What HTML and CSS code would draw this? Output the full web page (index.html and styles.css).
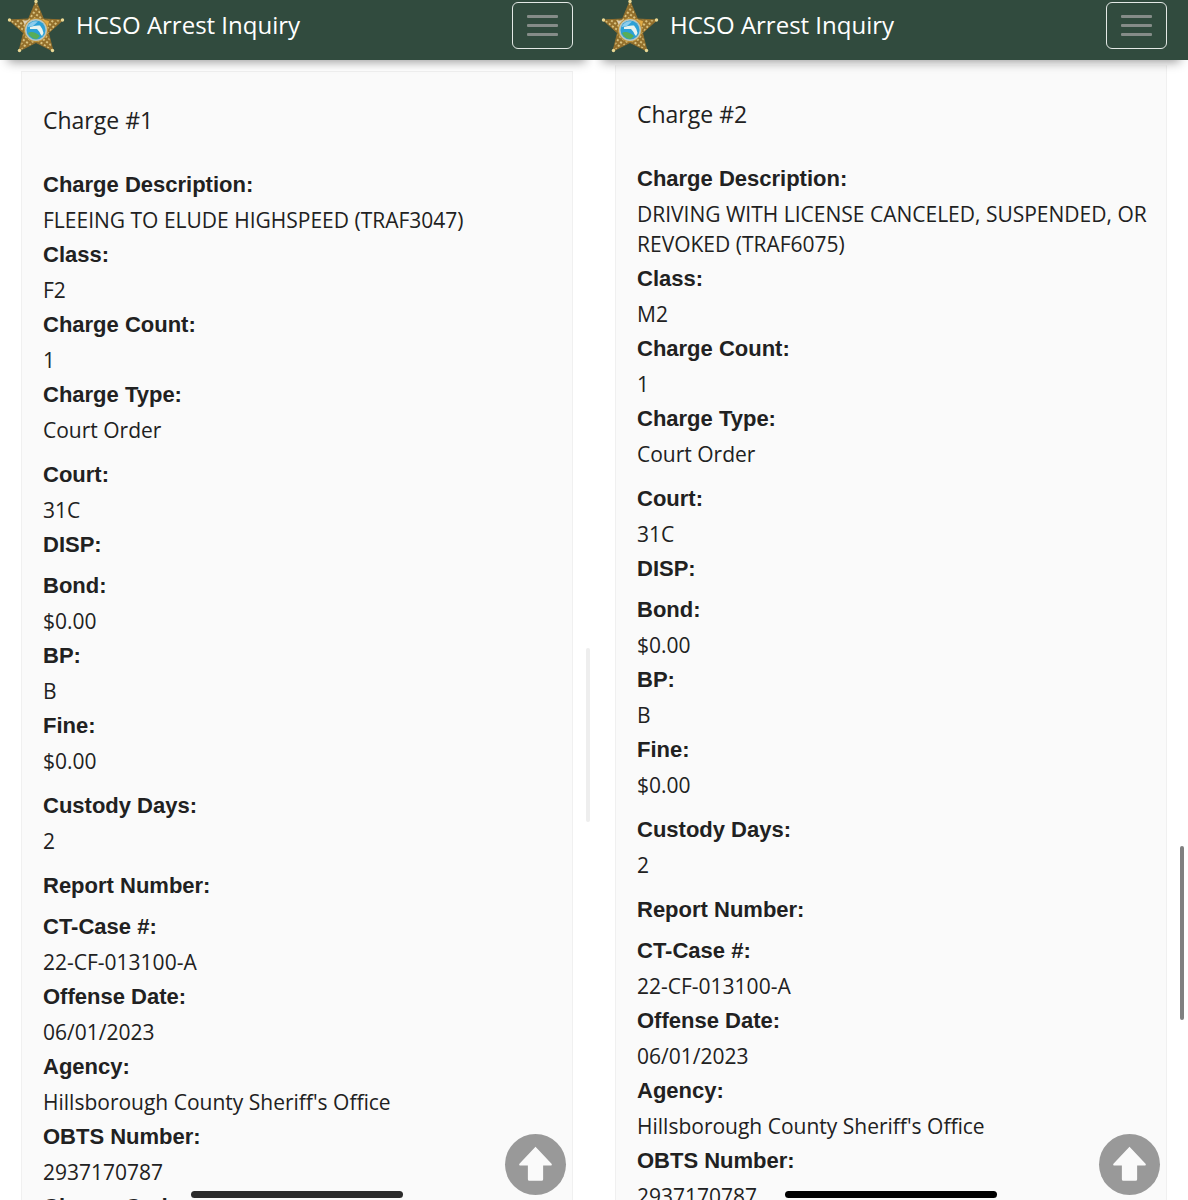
FILE: index.html
```html
<!DOCTYPE html>
<html lang="en">
<head>
<meta charset="utf-8">
<meta name="viewport" content="width=device-width, initial-scale=1">
<title>HCSO Arrest Inquiry</title>
<link rel="stylesheet" href="styles.css">
</head>
<body>
<svg width="0" height="0" class="defs" aria-hidden="true">
  <defs>
    <pattern id="beads" width="4" height="4" patternUnits="userSpaceOnUse" patternTransform="rotate(36)">
      <rect width="4" height="4" fill="#94702c"/>
      <circle cx="2" cy="2" r="1.100" fill="#ead591"/>
    </pattern>
    <symbol id="badge" viewBox="0 0 60 54">
      <path d="M30 1 37.500 19 57 20 42.500 33 47 51 30 42.500 13 51 17.500 33 3 20 22.500 19Z" fill="url(#beads)" stroke="#8f6d2c" stroke-width="1" stroke-linejoin="round"/>
      <g fill="#ead995"><circle cx="30" cy="1.500" r="1.700"/><circle cx="56.500" cy="20" r="1.700"/><circle cx="46.500" cy="50.500" r="1.700"/><circle cx="13.500" cy="50.500" r="1.700"/><circle cx="3.500" cy="20" r="1.700"/></g>
      <path d="M17 21 23 20 26 25 20 28Z" fill="#d9cfb6"/>
      <path d="M34 19 43 21 42 26 36 26Z" fill="#e0a943"/>
      <circle cx="30" cy="30" r="12" fill="#c0933a"/>
      <circle cx="30" cy="30" r="11" fill="#b9c5bd"/>
      <circle cx="30" cy="30" r="9.500" fill="#2ba0d6"/>
      <path d="M21.500 27Q25 20 32 21.500L27 26Z" fill="#8dccec"/>
      <path d="M22 33Q27 30 34 36L31 39Q25 39 22 33Z" fill="#58ad58"/>
      <path d="M24 27Q29 25 34 25.500 37 29 37.500 33L36 36Q34 34 33.500 32L31 29 24 29Z" fill="#e8f3ee"/>
    </symbol>
    <symbol id="up" viewBox="0 0 60 60">
      <path d="M30 12.500 46 29.500Q46.500 31 45 31H37.500V44.500Q37.500 46 36 46H24Q22.500 46 22.500 44.500V31H15Q13.500 31 14 29.500Z" fill="#fafafa"/>
    </symbol>
  </defs>
</svg>
<main class="screens">
  <section class="screen">
    <header class="navbar">
      <a class="brand" href="#"><svg class="logo" aria-hidden="true"><use href="#badge"/></svg><span>HCSO Arrest Inquiry</span></a>
      <button class="toggler" type="button" aria-label="Menu"><span></span><span></span><span></span></button>
    </header>
    <article class="card">
      <h2>Charge #1</h2>
      <dl>
        <dt>Charge Description:</dt><dd>FLEEING TO ELUDE HIGHSPEED (TRAF3047)</dd>
        <dt>Class:</dt><dd>F2</dd>
        <dt>Charge Count:</dt><dd>1</dd>
        <dt>Charge Type:</dt><dd>Court Order</dd>
      </dl>
      <dl>
        <dt>Court:</dt><dd>31C</dd>
        <dt>DISP:</dt>
      </dl>
      <dl>
        <dt>Bond:</dt><dd>$0.00</dd>
        <dt>BP:</dt><dd>B</dd>
        <dt>Fine:</dt><dd>$0.00</dd>
      </dl>
      <dl>
        <dt>Custody Days:</dt><dd>2</dd>
      </dl>
      <dl>
        <dt>Report Number:</dt>
      </dl>
      <dl>
        <dt>CT-Case #:</dt><dd>22-CF-013100-A</dd>
        <dt>Offense Date:</dt><dd>06/01/2023</dd>
        <dt>Agency:</dt><dd>Hillsborough County Sheriff's Office</dd>
        <dt>OBTS Number:</dt><dd>2937170787</dd>
        <dt>Charge Code:</dt>
      </dl>
    </article>
    <div class="scrollbar scrollbar-faded"></div>
    <button class="to-top" type="button" aria-label="Back to top"><svg aria-hidden="true"><use href="#up"/></svg></button>
    <div class="home-bar home-bar-soft"></div>
  </section>
  <section class="screen">
    <header class="navbar">
      <a class="brand" href="#"><svg class="logo" aria-hidden="true"><use href="#badge"/></svg><span>HCSO Arrest Inquiry</span></a>
      <button class="toggler" type="button" aria-label="Menu"><span></span><span></span><span></span></button>
    </header>
    <article class="card card-scrolled">
      <h2>Charge #2</h2>
      <dl>
        <dt>Charge Description:</dt><dd>DRIVING WITH LICENSE CANCELED, SUSPENDED, OR REVOKED (TRAF6075)</dd>
        <dt>Class:</dt><dd>M2</dd>
        <dt>Charge Count:</dt><dd>1</dd>
        <dt>Charge Type:</dt><dd>Court Order</dd>
      </dl>
      <dl>
        <dt>Court:</dt><dd>31C</dd>
        <dt>DISP:</dt>
      </dl>
      <dl>
        <dt>Bond:</dt><dd>$0.00</dd>
        <dt>BP:</dt><dd>B</dd>
        <dt>Fine:</dt><dd>$0.00</dd>
      </dl>
      <dl>
        <dt>Custody Days:</dt><dd>2</dd>
      </dl>
      <dl>
        <dt>Report Number:</dt>
      </dl>
      <dl>
        <dt>CT-Case #:</dt><dd>22-CF-013100-A</dd>
        <dt>Offense Date:</dt><dd>06/01/2023</dd>
        <dt>Agency:</dt><dd>Hillsborough County Sheriff's Office</dd>
        <dt>OBTS Number:</dt><dd>2937170787</dd>
      </dl>
    </article>
    <div class="scrollbar scrollbar-low"></div>
    <button class="to-top" type="button" aria-label="Back to top"><svg aria-hidden="true"><use href="#up"/></svg></button>
    <div class="home-bar"></div>
  </section>
</main>
</body>
</html>
```

FILE: styles.css
```css
* {
  box-sizing: border-box;
}

body {
  margin: 0;
  background: #fff;
  color: #212121;
  font-family: "Open Sans", sans-serif;
  font-size: 21px;
  line-height: 30px;
}

.defs {
  position: absolute;
}

.screens {
  display: grid;
  grid-template-columns: 1fr 1fr;
  height: 100vh;
}

.screen {
  position: relative;
  min-width: 0;
  overflow: hidden;
}

.navbar {
  position: relative;
  z-index: 1;
  display: flex;
  align-items: flex-start;
  justify-content: space-between;
  height: 60px;
  padding: 0 21px 0 6px;
  background: #314b3e;
  box-shadow: 0 10px 10px -8px rgba(0, 0, 0, 0.4);
}

.brand {
  display: flex;
  gap: 10px;
  color: #fff;
  font-size: 24px;
  line-height: 50px;
  text-decoration: none;
}

.logo {
  width: 60px;
  height: 54px;
}

.toggler {
  display: flex;
  flex-direction: column;
  align-items: center;
  justify-content: center;
  gap: 6px;
  width: 61px;
  height: 47px;
  margin-top: 2px;
  padding: 0;
  border: 1px solid #e4e9e6;
  border-radius: 6px;
  background: none;
}

.toggler span {
  width: 31px;
  height: 3px;
  border-radius: 1px;
  background: #858c88;
}

.card {
  margin: 11px 21px 0;
  padding: 30px 16px 30px 21px;
  border: 1px solid #f0f0f0;
  background: #fafafa;
}

.card-scrolled {
  margin-top: 5px;
  border-top-color: #fafafa;
}

h2 {
  margin: 0 0 31px;
  font-size: 23px;
  font-weight: 400;
  line-height: 36px;
}

dl {
  margin: 0 0 10px;
}

dt {
  font-family: "Liberation Sans", Arial, sans-serif;
  font-size: 22px;
  font-weight: 700;
  line-height: 31px;
}

dd {
  margin: 0;
  padding: 5px 0 4px;
}

.scrollbar {
  position: absolute;
  top: 54%;
  right: 4px;
  width: 4px;
  height: 174px;
  border-radius: 2px;
  background: #808080;
}

.scrollbar-faded {
  background: #eee;
}

.scrollbar-low {
  top: auto;
  bottom: 15%;
}

.to-top {
  position: absolute;
  right: 28px;
  bottom: 5px;
  width: 61px;
  height: 61px;
  padding: 0;
  border: 0;
  border-radius: 50%;
  background: #999;
}

.to-top svg {
  display: block;
  width: 100%;
  height: 100%;
}

.home-bar {
  position: absolute;
  bottom: 2px;
  left: 191px;
  right: 191px;
  height: 7px;
  border-radius: 4px;
  background: #000;
}

.home-bar-soft {
  background: #2b2b2b;
}
```
